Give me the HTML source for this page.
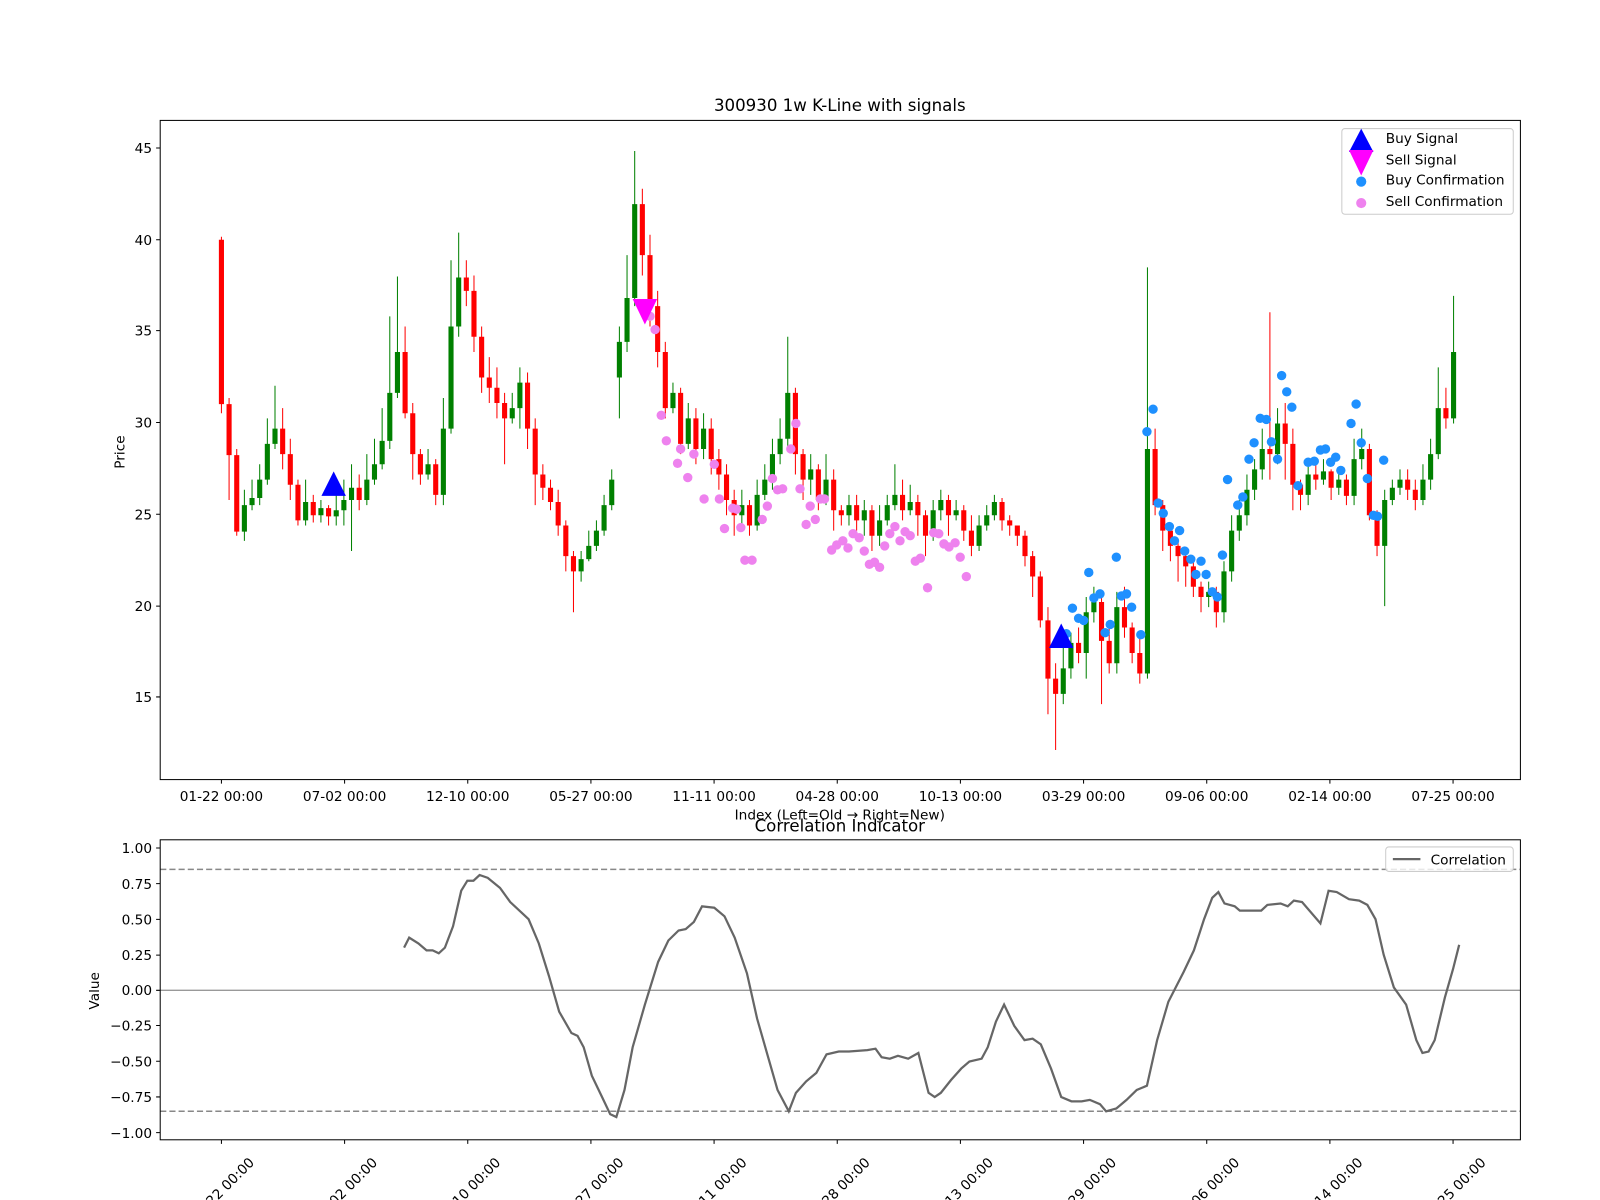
<!DOCTYPE html>
<html><head><meta charset="utf-8"><style>
html,body{margin:0;padding:0;background:#fff;}
svg{display:block;font-family:"DejaVu Sans","Liberation Sans",sans-serif;}
</style></head><body>
<svg width="1600" height="1200" viewBox="0 0 1568 1176" xmlns="http://www.w3.org/2000/svg">
<rect width="1568" height="1176" fill="#fff"/>
<!-- green candles -->
<path fill="none" stroke="#008000" stroke-width="1" d="M239.5 480V530M247 470V500M254.5 455V495M262 410V475M269.5 378V440M299.5 470V515M314.5 490V512M329.5 480V515M337 470V515M344.5 455V540M359.5 445V495M367 430V475M374.5 400V460M382 310V440M389.5 271V390M419.5 440V470M434.5 390V495M442 255V425M449.5 228V330M502 385V415M509.5 360V420M569.5 540V570M577 520V550M584.5 510V540M592 485V525M599.5 460V500M607 320V410M614.5 250V345M622 148V300M659.5 375V405M674.5 395V440M689.5 405V450M727 480V520M742 470V520M749.5 455V490M757 430V480M764.5 410V455M772 330V440M794.5 445V485M809.5 445V495M832 485V515M847 490V525M862 495V535M869.5 485V515M877 455V500M892 475V505M914.5 490V530M922 480V510M937 490V510M959.5 505V540M967 495V520M974.5 485V510M1042 630V690M1049.5 620V665M1064.5 585V665M1072 575V610M1094.5 580V660M1124.5 262V665M1184.5 570V595M1199.5 550V610M1207 505V570M1214.5 490V530M1222 465V515M1229.5 450V490M1237 420V470M1252 400V455M1282 455V495M1297 450V475M1312 460V485M1327 430V495M1334.5 420V460M1357 480V594M1364.5 470V495M1372 460V485M1394.5 455V495M1402 430V480M1409.5 360V450M1424.5 290V415"/>
<path fill="none" stroke="#008000" stroke-width="5" d="M239.5 521V495M247 495V488M254.5 488V470M262 470V435M269.5 435V420M299.5 510V492M314.5 505V498M329.5 506V500M337 500V490M344.5 490V478M359.5 490V470M367 470V455M374.5 455V432M382 432V385M389.5 385V345M419.5 465V455M434.5 485V420M442 420V320M449.5 320V272M502 410V400M509.5 400V375M569.5 560V548M577 548V535M584.5 535V520M592 520V495M599.5 495V470M607 370V335M614.5 335V292M622 292V200M659.5 400V385M674.5 435V410M689.5 440V420M727 505V495M742 515V485M749.5 485V470M757 470V445M764.5 445V430M772 430V385M794.5 470V460M809.5 490V470M832 505V495M847 510V500M862 525V510M869.5 510V495M877 495V485M892 500V492M914.5 525V500M922 500V490M937 505V500M959.5 535V515M967 515V505M974.5 505V492M1042 680V655M1049.5 655V630M1064.5 640V600M1072 600V590M1094.5 650V595M1124.5 660V440M1184.5 585V580M1199.5 600V560M1207 560V520M1214.5 520V505M1222 505V480M1229.5 480V460M1237 460V440M1252 445V415M1282 485V465M1297 470V462M1312 478V470M1327 486V450M1334.5 450V440M1357 535V490M1364.5 490V478M1372 478V470M1394.5 490V470M1402 470V445M1409.5 445V400M1424.5 410V345"/>
<!-- red candles -->
<path fill="none" stroke="#ff0000" stroke-width="1" d="M217 232V405M224.5 390V490M232 440V525M277 400V460M284.5 430V490M292 470V515M307 485V512M322 495V515M352 465V500M397 320V410M404.5 395V470M412 440V475M427 450V495M457 255V300M464.5 270V345M472 320V385M479.5 350V395M487 360V410M494.5 385V455M517 365V440M524.5 410V495M532 455V490M539.5 470V500M547 480V525M554.5 510V560M562 540V600M629.5 185V270M637 230V320M644.5 285V360M652 335V410M667 380V445M682 400V455M697 410V465M704.5 440V480M712 455V505M719.5 480V525M734.5 490V525M779.5 380V465M787 440V490M802 455V500M817 460V520M824.5 495V515M839.5 485V520M854.5 495V540M884.5 470V510M899.5 485V525M907 500V545M929.5 485V525M944.5 495V530M952 505V545M982 488V520M989.5 505V525M997 515V535M1004.5 520V555M1012 540V585M1019.5 560V615M1027 595V700M1034.5 650V735M1057 615V650M1079.5 580V690M1087 610V660M1102 575V625M1109.5 610V650M1117 625V670M1132 420V505M1139.5 490V540M1147 515V550M1154.5 530V570M1162 540V575M1169.5 550V585M1177 570V600M1192 575V615M1244.5 306V470M1259.5 395V470M1267 420V500M1274.5 470V500M1289.5 455V480M1304.5 460V490M1319.5 465V495M1342 435V510M1349.5 500V545M1379.5 460V490M1387 470V500M1417 380V420"/>
<path fill="none" stroke="#ff0000" stroke-width="5" d="M217 235V396M224.5 396V446M232 446V521M277 420V445M284.5 445V475M292 475V510M307 492V505M322 498V506M352 478V490M397 345V405M404.5 405V445M412 445V465M427 455V485M457 272V285M464.5 285V330M472 330V370M479.5 370V380M487 380V395M494.5 395V410M517 375V420M524.5 420V465M532 465V478M539.5 478V492M547 492V515M554.5 515V545M562 545V560M629.5 200V250M637 250V300M644.5 300V345M652 345V400M667 385V435M682 410V440M697 420V450M704.5 450V465M712 465V490M719.5 490V505M734.5 495V515M779.5 385V445M787 445V470M802 460V490M817 470V500M824.5 500V505M839.5 495V510M854.5 500V525M884.5 485V500M899.5 492V505M907 505V525M929.5 490V505M944.5 500V520M952 520V535M982 492V510M989.5 510V515M997 515V525M1004.5 525V545M1012 545V565M1019.5 565V608M1027 608V665M1034.5 665V680M1057 630V640M1079.5 590V628M1087 628V650M1102 595V615M1109.5 615V640M1117 640V660M1132 440V495M1139.5 495V520M1147 520V535M1154.5 535V545M1162 545V555M1169.5 555V575M1177 575V585M1192 580V600M1244.5 440V445M1259.5 415V435M1267 435V475M1274.5 475V485M1289.5 465V470M1304.5 462V478M1319.5 470V486M1342 440V505M1349.5 505V535M1379.5 470V480M1387 480V490M1417 400V410"/>
<!-- sell confirmations -->
<g fill="#ee82ee">
<circle cx="637" cy="310" r="4.6"/><circle cx="642" cy="323" r="4.6"/><circle cx="648" cy="407" r="4.6"/><circle cx="653" cy="432" r="4.6"/><circle cx="664" cy="454" r="4.6"/><circle cx="667" cy="440" r="4.6"/><circle cx="674" cy="468" r="4.6"/><circle cx="680" cy="445" r="4.6"/><circle cx="690" cy="489" r="4.6"/><circle cx="700" cy="455" r="4.6"/><circle cx="705" cy="489" r="4.6"/><circle cx="710" cy="518" r="4.6"/><circle cx="718" cy="498" r="4.6"/><circle cx="722" cy="499" r="4.6"/><circle cx="726" cy="517" r="4.6"/><circle cx="730" cy="549" r="4.6"/><circle cx="737" cy="549" r="4.6"/><circle cx="747" cy="509" r="4.6"/><circle cx="752" cy="496" r="4.6"/><circle cx="757" cy="469" r="4.6"/><circle cx="762" cy="480" r="4.6"/><circle cx="767" cy="479" r="4.6"/><circle cx="775" cy="440" r="4.6"/><circle cx="780" cy="415" r="4.6"/><circle cx="784" cy="479" r="4.6"/><circle cx="790" cy="514" r="4.6"/><circle cx="794" cy="496" r="4.6"/><circle cx="799" cy="509" r="4.6"/><circle cx="804" cy="489" r="4.6"/><circle cx="808" cy="489" r="4.6"/><circle cx="815" cy="539" r="4.6"/><circle cx="820" cy="534" r="4.6"/><circle cx="826" cy="530" r="4.6"/><circle cx="831" cy="537" r="4.6"/><circle cx="836" cy="523" r="4.6"/><circle cx="842" cy="527" r="4.6"/><circle cx="847" cy="540" r="4.6"/><circle cx="852" cy="553" r="4.6"/><circle cx="857" cy="551" r="4.6"/><circle cx="862" cy="556" r="4.6"/><circle cx="867" cy="535" r="4.6"/><circle cx="872" cy="523" r="4.6"/><circle cx="877" cy="516" r="4.6"/><circle cx="882" cy="530" r="4.6"/><circle cx="887" cy="521" r="4.6"/><circle cx="892" cy="525" r="4.6"/><circle cx="897" cy="550" r="4.6"/><circle cx="902" cy="547" r="4.6"/><circle cx="909" cy="576" r="4.6"/><circle cx="915" cy="522" r="4.6"/><circle cx="920" cy="523" r="4.6"/><circle cx="925" cy="533" r="4.6"/><circle cx="930" cy="536" r="4.6"/><circle cx="936" cy="532" r="4.6"/><circle cx="941" cy="546" r="4.6"/><circle cx="947" cy="565" r="4.6"/>
</g>
<!-- buy confirmations -->
<g fill="#1e90ff">
<circle cx="1045" cy="621" r="4.6"/><circle cx="1051" cy="596" r="4.6"/><circle cx="1057" cy="606" r="4.6"/><circle cx="1062" cy="608" r="4.6"/><circle cx="1067" cy="561" r="4.6"/><circle cx="1072" cy="586" r="4.6"/><circle cx="1078" cy="582" r="4.6"/><circle cx="1083" cy="620" r="4.6"/><circle cx="1088" cy="612" r="4.6"/><circle cx="1094" cy="546" r="4.6"/><circle cx="1099" cy="584" r="4.6"/><circle cx="1104" cy="582" r="4.6"/><circle cx="1109" cy="595" r="4.6"/><circle cx="1118" cy="622" r="4.6"/><circle cx="1124" cy="423" r="4.6"/><circle cx="1130" cy="401" r="4.6"/><circle cx="1135" cy="493" r="4.6"/><circle cx="1140" cy="503" r="4.6"/><circle cx="1146" cy="516" r="4.6"/><circle cx="1151" cy="530" r="4.6"/><circle cx="1156" cy="520" r="4.6"/><circle cx="1161" cy="540" r="4.6"/><circle cx="1167" cy="548" r="4.6"/><circle cx="1172" cy="563" r="4.6"/><circle cx="1177" cy="550" r="4.6"/><circle cx="1182" cy="563" r="4.6"/><circle cx="1188" cy="580" r="4.6"/><circle cx="1193" cy="585" r="4.6"/><circle cx="1198" cy="544" r="4.6"/><circle cx="1203" cy="470" r="4.6"/><circle cx="1213" cy="495" r="4.6"/><circle cx="1218" cy="487" r="4.6"/><circle cx="1224" cy="450" r="4.6"/><circle cx="1229" cy="434" r="4.6"/><circle cx="1235" cy="410" r="4.6"/><circle cx="1241" cy="411" r="4.6"/><circle cx="1246" cy="433" r="4.6"/><circle cx="1252" cy="450" r="4.6"/><circle cx="1256" cy="368" r="4.6"/><circle cx="1261" cy="384" r="4.6"/><circle cx="1266" cy="399" r="4.6"/><circle cx="1272" cy="476" r="4.6"/><circle cx="1282" cy="453" r="4.6"/><circle cx="1288" cy="452" r="4.6"/><circle cx="1294" cy="441" r="4.6"/><circle cx="1299" cy="440" r="4.6"/><circle cx="1304" cy="453" r="4.6"/><circle cx="1309" cy="448" r="4.6"/><circle cx="1314" cy="461" r="4.6"/><circle cx="1324" cy="415" r="4.6"/><circle cx="1329" cy="396" r="4.6"/><circle cx="1334" cy="434" r="4.6"/><circle cx="1340" cy="469" r="4.6"/><circle cx="1346" cy="505" r="4.6"/><circle cx="1350" cy="506" r="4.6"/><circle cx="1356" cy="451" r="4.6"/>
</g>
<!-- signals -->
<polygon points="327,462 315,486 339,486" fill="#0000ff"/>
<polygon points="1040,611 1028,635 1052,635" fill="#0000ff"/>
<polygon points="620,293 644,293 632,318" fill="#ff00ff"/>
<rect x="157" y="118" width="1333" height="646" fill="none" stroke="#000" stroke-width="1"/>
<!-- axes ticks -->
<g stroke="#000" stroke-width="1">
<path d="M153 683H157M153 594H157M153 504H157M153 414H157M153 324H157M153 235H157M153 145H157"/>
<path d="M153 831H157M153 866H157M153 901H157M153 936H157M153 970.5H157M153 1005H157M153 1040H157M153 1075H157M153 1110H157"/>
<path d="M217 764V768M337.7 764V768M458.4 764V768M579.1 764V768M699.8 764V768M820.5 764V768M941.2 764V768M1061.9 764V768M1182.6 764V768M1303.3 764V768M1424 764V768"/>
<path d="M217 1117V1121M337.7 1117V1121M458.4 1117V1121M579.1 1117V1121M699.8 1117V1121M820.5 1117V1121M941.2 1117V1121M1061.9 1117V1121M1182.6 1117V1121M1303.3 1117V1121M1424 1117V1121"/>
</g>
<g font-size="13.4" text-anchor="end">
<text x="149" y="688">15</text><text x="149" y="599">20</text><text x="149" y="509">25</text><text x="149" y="419">30</text><text x="149" y="329">35</text><text x="149" y="240">40</text><text x="149" y="150">45</text>
<text x="149" y="836">1.00</text><text x="149" y="871">0.75</text><text x="149" y="906">0.50</text><text x="149" y="941">0.25</text><text x="149" y="975">0.00</text><text x="149" y="1010">−0.25</text><text x="149" y="1045">−0.50</text><text x="149" y="1080">−0.75</text><text x="149" y="1115">−1.00</text>
</g>
<g font-size="13.4" text-anchor="middle">
<text x="217" y="785">01-22 00:00</text><text x="337.7" y="785">07-02 00:00</text><text x="458.4" y="785">12-10 00:00</text><text x="579.1" y="785">05-27 00:00</text><text x="699.8" y="785">11-11 00:00</text><text x="820.5" y="785">04-28 00:00</text><text x="941.2" y="785">10-13 00:00</text><text x="1061.9" y="785">03-29 00:00</text><text x="1182.6" y="785">09-06 00:00</text><text x="1303.3" y="785">02-14 00:00</text><text x="1424" y="785">07-25 00:00</text>
<text transform="translate(221,1169) rotate(-45)">01-22 00:00</text>
<text transform="translate(341.7,1169) rotate(-45)">07-02 00:00</text>
<text transform="translate(462.4,1169) rotate(-45)">12-10 00:00</text>
<text transform="translate(583.1,1169) rotate(-45)">05-27 00:00</text>
<text transform="translate(703.8,1169) rotate(-45)">11-11 00:00</text>
<text transform="translate(824.5,1169) rotate(-45)">04-28 00:00</text>
<text transform="translate(945.2,1169) rotate(-45)">10-13 00:00</text>
<text transform="translate(1065.9,1169) rotate(-45)">03-29 00:00</text>
<text transform="translate(1186.6,1169) rotate(-45)">09-06 00:00</text>
<text transform="translate(1307.3,1169) rotate(-45)">02-14 00:00</text>
<text transform="translate(1428,1169) rotate(-45)">07-25 00:00</text>
</g>
<text x="823" y="109" font-size="16.3" text-anchor="middle">300930 1w K-Line with signals</text>
<text x="823" y="803" font-size="13.4" text-anchor="middle">Index (Left=Old → Right=New)</text>
<text x="823" y="815" font-size="16.3" text-anchor="middle">Correlation Indicator</text>
<text transform="translate(122,443) rotate(-90)" font-size="13.4" text-anchor="middle">Price</text>
<text transform="translate(97,971) rotate(-90)" font-size="13.4" text-anchor="middle">Value</text>
<!-- legend main -->
<rect x="1315" y="126" width="168" height="84" rx="3" fill="#fff" fill-opacity="0.8" stroke="#ccc"/>
<polygon points="1334,126 1322,149 1346,149" fill="#0000ff"/>
<polygon points="1322,147 1346,147 1334,172" fill="#ff00ff"/>
<circle cx="1334" cy="178" r="5" fill="#1e90ff"/>
<circle cx="1334" cy="199" r="5" fill="#ee82ee"/>
<g font-size="13.4"><text x="1358" y="140">Buy Signal</text><text x="1358" y="161">Sell Signal</text><text x="1358" y="181">Buy Confirmation</text><text x="1358" y="202">Sell Confirmation</text></g>
<!-- lower -->
<line x1="157" y1="970.5" x2="1490" y2="970.5" stroke="#999" stroke-width="1.3"/>
<line x1="157" y1="852" x2="1490" y2="852" stroke="#888" stroke-width="1.5" stroke-dasharray="6,3"/>
<line x1="157" y1="1089" x2="1490" y2="1089" stroke="#888" stroke-width="1.5" stroke-dasharray="6,3"/>
<polyline fill="none" stroke="#666" stroke-width="2.2" points="396,928.7 401,918.9 410,924.5 418,931.4 424,931.4 430,934.2 436,928.7 444,907.7 452,872.9 458,863.1 464,863.1 470,857.5 478,860.3 490,870.1 500,884 512,895.2 518,900.8 528,924.5 538,956.6 548,991.4 560,1012.4 566,1015.1 572,1026.3 580,1054.2 590,1075.1 598,1091.9 604,1094.7 612,1068.2 620,1026.3 632,984.5 645,942.6 655,921.7 665,911.9 672,910.5 680,903.5 688,888.2 700,889.6 710,898 720,918.9 732,953.8 742,998.4 752,1033.3 762,1068.2 773,1089.1 780,1071 790,1059.8 800,1051.4 810,1033.3 822,1030.5 832,1030.5 850,1029.1 858,1027.7 864,1036.1 872,1037.5 880,1034.7 890,1037.5 900,1031.9 910,1071 916,1075.1 922,1071 932,1058.4 942,1047.2 950,1040.3 962,1037.5 968,1026.3 976,1001.2 984,984.5 994,1005.4 1004,1019.3 1012,1017.9 1020,1023.5 1030,1047.2 1040,1075.1 1050,1079.3 1060,1079.3 1068,1077.9 1078,1082.1 1084,1089.1 1094,1086.3 1104,1077.9 1114,1068.2 1124,1064 1134,1019.3 1145,981.7 1160,952.4 1170,931.4 1180,900.8 1188,879.8 1194,874.2 1200,885.4 1210,888.2 1215,892.4 1236,892.4 1242,886.8 1255,885.4 1262,888.2 1268,882.6 1276,884 1294,904.9 1302,872.9 1310,874.2 1322,881.2 1332,882.6 1340,886.8 1348,900.8 1356,935.6 1366,967.7 1378,984.5 1388,1019.3 1394,1031.9 1400,1030.5 1406,1019.3 1416,977.5 1424,949.6 1430,925.9"/>
<rect x="157" y="823" width="1333" height="294" fill="none" stroke="#000" stroke-width="1"/>
<rect x="1358" y="830" width="125" height="24" rx="3" fill="#fff" fill-opacity="0.8" stroke="#ccc"/>
<line x1="1365" y1="842" x2="1392" y2="842" stroke="#666" stroke-width="2.2"/>
<text x="1402" y="847" font-size="13.4">Correlation</text>
</svg>
</body></html>
